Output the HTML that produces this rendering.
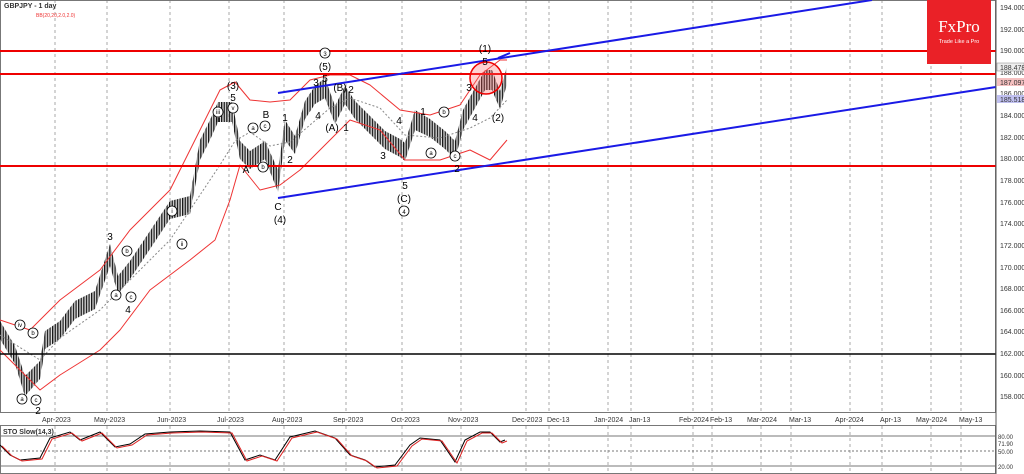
<!DOCTYPE html>
<html><head><meta charset="utf-8"><style>
html,body{margin:0;padding:0;background:#fff;width:1024px;height:474px;overflow:hidden}
svg{display:block;font-family:"Liberation Sans",sans-serif}
</style></head><body>
<svg width="1024" height="474" viewBox="0 0 1024 474" xmlns="http://www.w3.org/2000/svg">
<defs>
<pattern id="vb" width="2.6" height="7" patternUnits="userSpaceOnUse">
<rect x="0" y="0" width="1.2" height="7" fill="#111"/>
<rect x="1.3" y="0" width="0.7" height="7" fill="#aaa"/>
</pattern>
</defs>
<rect width="1024" height="474" fill="#fff"/>
<g stroke="#aaa" stroke-dasharray="3,3" stroke-width="1">
<line x1="55" y1="0" x2="55" y2="474"/><line x1="107" y1="0" x2="107" y2="474"/><line x1="170" y1="0" x2="170" y2="474"/><line x1="229" y1="0" x2="229" y2="474"/><line x1="284" y1="0" x2="284" y2="474"/><line x1="346" y1="0" x2="346" y2="474"/><line x1="402" y1="0" x2="402" y2="474"/><line x1="461" y1="0" x2="461" y2="474"/><line x1="526" y1="0" x2="526" y2="474"/><line x1="549" y1="0" x2="549" y2="474"/><line x1="608" y1="0" x2="608" y2="474"/><line x1="631" y1="0" x2="631" y2="474"/><line x1="693" y1="0" x2="693" y2="474"/><line x1="712" y1="0" x2="712" y2="474"/><line x1="761" y1="0" x2="761" y2="474"/><line x1="791" y1="0" x2="791" y2="474"/><line x1="850" y1="0" x2="850" y2="474"/><line x1="882" y1="0" x2="882" y2="474"/><line x1="931" y1="0" x2="931" y2="474"/><line x1="961" y1="0" x2="961" y2="474"/>
</g>
<rect x="0" y="413" width="996" height="12" fill="#fff"/>
<g font-size="7" fill="#333">
<text x="42" y="422">Apr-2023</text><text x="94" y="422">May-2023</text><text x="157" y="422">Jun-2023</text><text x="217" y="422">Jul-2023</text><text x="272" y="422">Aug-2023</text><text x="333" y="422">Sep-2023</text><text x="391" y="422">Oct-2023</text><text x="448" y="422">Nov-2023</text><text x="512" y="422">Dec-2023</text><text x="547" y="422">Dec-13</text><text x="594" y="422">Jan-2024</text><text x="629" y="422">Jan-13</text><text x="679" y="422">Feb-2024</text><text x="710" y="422">Feb-13</text><text x="747" y="422">Mar-2024</text><text x="789" y="422">Mar-13</text><text x="835" y="422">Apr-2024</text><text x="880" y="422">Apr-13</text><text x="916" y="422">May-2024</text><text x="959" y="422">May-13</text>
</g>
<g stroke="#777" fill="none"><rect x="0.5" y="0.5" width="995" height="412"/><rect x="0.5" y="425.5" width="995" height="48"/></g>
<!-- price bars approximation: vertical-striped band -->
<polygon fill="url(#vb)" points="0,321 15,346 25,376 40,361 45,331 60,321 75,301 95,291 110,244 118,276 130,261 150,231 170,201 190,196 200,140 210,120 218,102 232,102 240,141 250,151 265,141 278,170 285,120 295,136 305,101 315,86 325,78 335,106 345,86 355,101 370,116 385,131 400,139 405,143 415,110 430,119 445,131 455,141 463,110 475,88 485,70 492,70 500,91 507,66 507,84 500,109 492,90 485,90 475,108 463,130 455,159 445,149 430,137 415,130 405,161 400,157 385,149 370,134 355,119 345,104 335,124 325,98 315,104 305,119 295,154 285,140 278,192 265,159 250,169 240,159 232,122 218,122 210,140 200,160 190,214 170,219 150,249 130,279 118,294 110,266 95,309 75,319 60,339 45,349 40,379 25,396 15,364 0,339"/>
<g fill="none" stroke-linejoin="round">
<polyline stroke="#e33" points="0,320 30,330 60,300 100,270 130,230 170,190 200,130 220,90 235,82 250,100 270,102 290,100 310,80 330,75 350,75 370,85 400,110 430,115 460,105 480,75 500,60 507,60"/>
<polyline stroke="#e33" points="0,350 40,390 60,375 100,350 120,330 150,290 190,260 215,240 230,200 240,165 260,190 280,185 300,170 330,140 350,120 380,130 405,160 440,160 470,150 490,160 507,140"/>
<polyline stroke="#888" stroke-dasharray="2,2" points="0,335 40,360 60,338 100,310 130,280 170,240 200,195 220,165 235,141 250,132 270,146 290,142 310,125 330,108 350,98 380,108 405,135 440,138 470,128 490,118 507,100"/>
</g>
<g stroke="#e00" stroke-width="2"><line x1="0" y1="51" x2="996" y2="51"/><line x1="0" y1="74" x2="996" y2="74"/><line x1="0" y1="166" x2="996" y2="166"/></g>
<line x1="0" y1="354" x2="996" y2="354" stroke="#000" stroke-width="1.5"/>
<g stroke="#1a1ae6" stroke-width="2"><line x1="278" y1="93" x2="872" y2="0"/><line x1="278" y1="198" x2="996" y2="87"/><line x1="498" y1="58" x2="510" y2="53"/></g>
<circle cx="486" cy="78" r="16" fill="#f66" fill-opacity="0.3" stroke="#e00" stroke-width="1.5"/>
<g font-size="10" fill="#000" text-anchor="middle">
<text x="233" y="89">(3)</text><text x="233" y="101">5</text><text x="218" y="122" font-size="7">iii</text><text x="233" y="111" font-size="7">v</text>
<text x="266" y="118">B</text><text x="285" y="121">1</text><text x="290" y="163">2</text><text x="246" y="173">A</text><text x="278" y="210">C</text><text x="280" y="223">(4)</text>
<text x="325" y="57">3</text><text x="325" y="70">(5)</text><text x="316" y="86">3</text><text x="325" y="82">5</text><text x="318" y="119">4</text><text x="332" y="131">(A)</text><text x="340" y="91">(B)</text><text x="351" y="93">2</text><text x="346" y="131">1</text>
<text x="383" y="159">3</text><text x="399" y="124">4</text><text x="423" y="115">1</text><text x="405" y="189">5</text><text x="404" y="202">(C)</text><text x="404" y="215">4</text>
<text x="485" y="52">(1)</text><text x="485" y="65">5</text><text x="469" y="91">3</text><text x="475" y="121">4</text><text x="498" y="121">(2)</text><text x="457" y="172">2</text>
<text x="110" y="240">3</text><text x="128" y="313">4</text><text x="38" y="414">2</text>
</g>
<g fill="#fff" stroke="#000" stroke-width="0.8"><circle cx="325" cy="53" r="5"/><circle cx="404" cy="211" r="5"/><circle cx="444" cy="112" r="5"/><circle cx="431" cy="153" r="5"/><circle cx="455" cy="156" r="5"/><circle cx="253" cy="128" r="5"/><circle cx="265" cy="126" r="5"/><circle cx="263" cy="167" r="5"/><circle cx="218" cy="112" r="5"/><circle cx="233" cy="108" r="5"/><circle cx="172" cy="211" r="5"/><circle cx="182" cy="244" r="5"/><circle cx="127" cy="251" r="5"/><circle cx="116" cy="295" r="5"/><circle cx="131" cy="297" r="5"/><circle cx="33" cy="333" r="5"/><circle cx="20" cy="325" r="5"/><circle cx="22" cy="399" r="5"/><circle cx="36" cy="400" r="5"/></g>
<g font-size="6" fill="#000" text-anchor="middle"><text x="325" y="56">3</text><text x="404" y="214">4</text><text x="444" y="114">b</text><text x="431" y="155">a</text><text x="455" y="158">c</text><text x="253" y="130">a</text><text x="265" y="128">c</text><text x="263" y="169">b</text><text x="218" y="114">iii</text><text x="233" y="110">v</text><text x="172" y="213">i</text><text x="182" y="246">ii</text><text x="127" y="253">b</text><text x="116" y="297">a</text><text x="131" y="299">c</text><text x="33" y="335">b</text><text x="20" y="327">iv</text><text x="22" y="401">a</text><text x="36" y="402">c</text></g>
<rect x="927" y="0" width="64" height="64" fill="#ea2127"/>
<text x="959" y="32" font-family="Liberation Serif,serif" font-size="17" fill="#fff" text-anchor="middle">FxPro</text>
<text x="959" y="43" font-size="5.5" fill="#fff" text-anchor="middle">Trade Like a Pro</text>
<text x="4" y="8" font-size="7" font-weight="bold" fill="#333">GBPJPY - 1 day</text>
<text x="36" y="17" font-size="5" fill="#e33">BB(20,20,2.0,2.0)</text>
<g font-size="7" fill="#333">
<text x="1000" y="10">194.000</text><text x="1000" y="32">192.000</text><text x="1000" y="53">190.000</text><text x="1000" y="75">188.000</text><text x="1000" y="96">186.000</text><text x="1000" y="118">184.000</text><text x="1000" y="140">182.000</text><text x="1000" y="161">180.000</text><text x="1000" y="183">178.000</text><text x="1000" y="205">176.000</text><text x="1000" y="226">174.000</text><text x="1000" y="248">172.000</text><text x="1000" y="270">170.000</text><text x="1000" y="291">168.000</text><text x="1000" y="313">166.000</text><text x="1000" y="334">164.000</text><text x="1000" y="356">162.000</text><text x="1000" y="378">160.000</text><text x="1000" y="399">158.000</text>
</g>
<rect x="997" y="63" width="27" height="8" fill="#eee" stroke="#888" stroke-width="0.5"/><text x="1000" y="70" font-size="7" fill="#333">188.478</text>
<rect x="997" y="78" width="27" height="8" fill="#f5c0c0"/><text x="1000" y="85" font-size="7" fill="#333">187.097</text>
<rect x="997" y="95" width="27" height="8" fill="#c0c0f0"/><text x="1000" y="102" font-size="7" fill="#333">185.518</text>
<g stroke="#777" stroke-width="1"><line x1="0" y1="436" x2="996" y2="436"/><line x1="0" y1="466" x2="996" y2="466"/></g>
<line x1="0" y1="451" x2="996" y2="451" stroke="#777" stroke-dasharray="2,2"/>
<text x="3" y="434" font-size="7" font-weight="bold" fill="#333">STO Slow(14,3)</text>
<g font-size="6" fill="#333"><text x="998" y="439">80.00</text><text x="998" y="446">71.90</text><text x="998" y="454">50.00</text><text x="998" y="469">20.00</text></g>
<path fill="none" stroke="#000" d="M0,445L10,455L20,460L40,458L50,438L70,432L80,440L100,432L115,447L130,444L145,434L170,432L200,431L230,432L245,460L260,455L275,460L290,437L315,431L335,438L350,455L365,460L375,467L395,465L410,445L420,438L440,440L455,462L465,440L480,432L490,432L500,442L505,440"/>
<path fill="none" stroke="#d22" d="M2,446L12,456L22,461L42,459L52,439L72,433L82,441L102,433L117,448L132,445L147,435L172,433L202,432L232,433L247,461L262,456L277,461L292,438L317,432L337,439L352,456L367,461L377,468L397,466L412,446L422,439L442,441L457,463L467,441L482,433L492,433L502,443L507,441"/>
<line x1="996" y1="0" x2="996" y2="474" stroke="#555"/>
</svg>
</body></html>
